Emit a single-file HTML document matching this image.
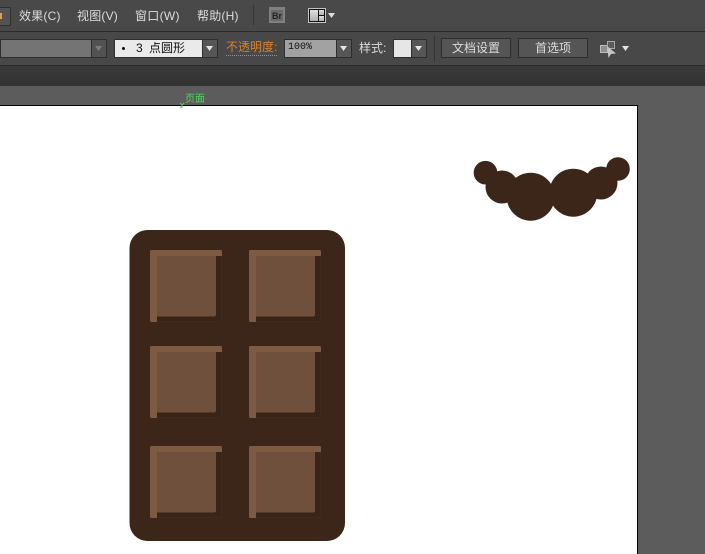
<!DOCTYPE html>
<html><head><meta charset="utf-8">
<style>
html,body{margin:0;padding:0;width:705px;height:554px;overflow:hidden;background:#5c5c5c}
#a{position:relative;width:705px;height:554px;overflow:hidden;font-family:"Liberation Sans","Noto Sans CJK SC",sans-serif}
.abs,.t{position:absolute}
.t{white-space:nowrap;font-size:12px;line-height:16px;color:#dcdcdc}
.m{letter-spacing:0.2px}
</style></head><body><div id="a">
<div class="abs" style="left:0;top:0;width:705px;height:31px;background:#494949"></div>
<div class="abs" style="left:0;top:31px;width:705px;height:1px;background:#2c2c2c"></div>
<div class="abs" style="left:0;top:32px;width:705px;height:33px;background:#484848"></div>
<div class="abs" style="left:0;top:65px;width:705px;height:1px;background:#2a2a2a"></div>
<div class="abs" style="left:0;top:66px;width:705px;height:20px;background:linear-gradient(#3a3a3a,#313131)"></div>
<div class="abs" style="left:0;top:86px;width:705px;height:468px;background:#5c5c5c"></div>

<div class="abs" style="left:-10px;top:7px;width:19px;height:17px;background:#535353;border:1px solid #2f2f2f;border-radius:2px"></div>
<div class="abs" style="left:0;top:13px;width:2px;height:6px;background:#e0a050"></div>
<div class="t m" style="left:19px;top:8px">效果(C)</div>
<div class="t m" style="left:77px;top:8px">视图(V)</div>
<div class="t m" style="left:135px;top:8px;letter-spacing:0.3px">窗口(W)</div>
<div class="t m" style="left:197px;top:8px;letter-spacing:0.2px">帮助(H)</div>
<div class="abs" style="left:253px;top:5px;width:1px;height:20px;background:#333"></div>

<div class="abs" style="left:269px;top:7px;width:16px;height:16px;background:#808080"></div>
<div class="abs" style="left:271px;top:10px;width:12px;height:11px;background:#6a6a6a"></div>
<div class="t" style="left:272px;top:9px;font-size:9px;line-height:14px;font-weight:bold;color:#222">Br</div>

<svg class="abs" style="left:308px;top:8px" width="28" height="16">
<defs><linearGradient id="c" x1="0" y1="0" x2="0" y2="1"><stop offset="0" stop-color="#e0e0e0"/><stop offset="1" stop-color="#b0b0b0"/></linearGradient></defs>
<rect x="0" y="0" width="18" height="15" fill="#c4c4c4"/>
<rect x="1" y="1" width="16" height="13" fill="#111"/>
<rect x="2" y="2" width="8" height="11" fill="url(#c)"/>
<rect x="11" y="2" width="5" height="5" fill="url(#c)"/>
<rect x="11" y="8" width="5" height="5" fill="url(#c)"/>
<path d="M20 5h7l-3.500 5z" fill="#ddd"/>
</svg>

<div class="abs" style="left:0;top:39px;width:107px;height:19px;background:#2e2e2e"></div>
<div class="abs" style="left:1px;top:40px;width:90px;height:17px;background:#747474"></div>
<div class="abs" style="left:92px;top:40px;width:14px;height:17px;background:#525252"></div>
<svg class="abs" style="left:94px;top:45px" width="10" height="8"><path d="M1 1h7l-3.500 5z" fill="#7c7c7c"/></svg>

<div class="abs" style="left:114px;top:39px;width:104px;height:19px;background:#2e2e2e"></div>
<div class="abs" style="left:115px;top:40px;width:87px;height:17px;background:#eaeaea"></div>
<div class="abs" style="left:203px;top:40px;width:14px;height:17px;background:#565656"></div>
<svg class="abs" style="left:205px;top:45px" width="10" height="8"><path d="M1 1h7l-3.500 5z" fill="#e4e4e4"/></svg>
<div class="abs" style="left:122px;top:47px;width:3px;height:3px;border-radius:50%;background:#111"></div>
<div class="t" style="left:136px;top:40px;color:#111">3</div>
<div class="t" style="left:149px;top:40px;color:#111">点圆形</div>

<div class="t" style="left:226px;top:40px;color:#d9822b;border-bottom:1px dotted #d9822b;line-height:15px;height:15px">不透明度:</div>

<div class="abs" style="left:284px;top:39px;width:68px;height:19px;background:#2e2e2e"></div>
<div class="abs" style="left:285px;top:40px;width:51px;height:17px;background:#a2a2a2"></div>
<div class="abs" style="left:337px;top:40px;width:14px;height:17px;background:#565656"></div>
<svg class="abs" style="left:339px;top:45px" width="10" height="8"><path d="M1 1h7l-3.500 5z" fill="#e4e4e4"/></svg>
<div class="t" style="left:288px;top:40px;font-family:'Liberation Mono',monospace;font-size:10px;color:#111">100%</div>

<div class="t" style="left:359px;top:40px">样式:</div>
<div class="abs" style="left:393px;top:39px;width:34px;height:19px;background:#2e2e2e"></div>
<div class="abs" style="left:394px;top:40px;width:17px;height:17px;background:#e6e6e6"></div>
<div class="abs" style="left:412px;top:40px;width:14px;height:17px;background:#565656"></div>
<svg class="abs" style="left:414px;top:45px" width="10" height="8"><path d="M1 1h7l-3.500 5z" fill="#e4e4e4"/></svg>
<div class="abs" style="left:434px;top:36px;width:1px;height:25px;background:#333"></div>

<div class="t" style="left:441px;top:38px;width:68px;height:18px;line-height:18px;text-align:center;background:#555;border:1px solid #2e2e2e">文档设置</div>
<div class="t" style="left:518px;top:38px;width:68px;height:18px;line-height:18px;text-align:center;background:#555;border:1px solid #2e2e2e">首选项</div>

<svg class="abs" style="left:594px;top:36px" width="40" height="24">
<rect x="6.500" y="9.500" width="7" height="7" fill="#8e8e8e" stroke="#bdbdbd"/>
<rect x="13.500" y="5.500" width="7" height="7" fill="#5c5c5c" stroke="#a8a8a8"/>
<path d="M13 10l9 7.500-5 .5-2.500 4z" fill="#c4c4c4"/>
<path d="M28 10h7l-3.500 5z" fill="#e4e4e4"/>
</svg>

<div class="abs" style="left:0;top:105px;width:637px;height:449px;background:#fff;border-top:1px solid #000;border-right:1px solid #000"></div>
<div class="t" style="left:185px;top:94px;font-size:10px;line-height:11px;color:#4fd35a">页面</div>
<svg class="abs" style="left:178px;top:102px" width="8" height="7"><path d="M2 1l2 2 2-2M4 3v3M2 6l2-2" stroke="#4fd35a" fill="none"/></svg>

<svg class="abs" style="left:0;top:0" width="705" height="554">
<g fill="#3c2619">
<circle cx="485.500" cy="172.700" r="11.800"/>
<circle cx="502" cy="187" r="16.500"/>
<circle cx="530.700" cy="196.700" r="24"/>
<circle cx="573.300" cy="192.700" r="24"/>
<circle cx="601" cy="183" r="16.500"/>
<circle cx="618" cy="169" r="11.800"/>
<rect x="129.500" y="230" width="215.500" height="311" rx="18"/>
</g>
<defs>
<g id="s">
<rect x="0.250" y="0.250" width="71.500" height="71.500" rx="1" fill="#3a2417" stroke="#47301f" stroke-width="0.500"/>
<path d="M1.500 0H70.500Q72 0 72 1.500V6H8Q7 6 7 7V72H1.500Q0 72 0 70.500V1.500Q0 0 1.500 0Z" fill="#7d5a42"/>
<path d="M7 7Q7 6 8 6H66V64.500Q66 66.500 64 66.500H7Z" fill="#6f503c"/>
</g>
</defs>
<use href="#s" x="150" y="250"/>
<use href="#s" x="249" y="250"/>
<use href="#s" x="150" y="346"/>
<use href="#s" x="249" y="346"/>
<use href="#s" x="150" y="446"/>
<use href="#s" x="249" y="446"/>
</svg>
</div></body></html>
